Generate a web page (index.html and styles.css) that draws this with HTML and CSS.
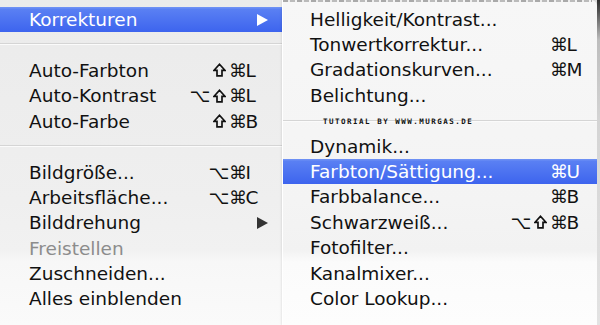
FILE: index.html
```html
<!DOCTYPE html>
<html lang="de">
<head>
<meta charset="utf-8">
<title>Korrekturen</title>
<link rel="stylesheet" href="styles.css">
</head>
<body>
<div class="screen">
  <div class="menu main">
    <div class="item hl"><span class="label">Korrekturen</span><span class="arrow"></span></div>
    <div class="sep"></div>
    <div class="item"><span class="label">Auto-Farbton</span><span class="keys"><span class="mod"><svg class="shift" viewBox="0 0 13 14" aria-label="⇧"><path d="M6.5 1.3 L11.9 7.3 H9 V12.9 H4 V7.3 H1.1 Z"/></svg></span><span class="mod">⌘</span><span class="key">L</span></span></div>
    <div class="item"><span class="label">Auto-Kontrast</span><span class="keys"><span class="mod">⌥</span><span class="mod"><svg class="shift" viewBox="0 0 13 14" aria-label="⇧"><path d="M6.5 1.3 L11.9 7.3 H9 V12.9 H4 V7.3 H1.1 Z"/></svg></span><span class="mod">⌘</span><span class="key">L</span></span></div>
    <div class="item"><span class="label">Auto-Farbe</span><span class="keys"><span class="mod"><svg class="shift" viewBox="0 0 13 14" aria-label="⇧"><path d="M6.5 1.3 L11.9 7.3 H9 V12.9 H4 V7.3 H1.1 Z"/></svg></span><span class="mod">⌘</span><span class="key">B</span></span></div>
    <div class="sep"></div>
    <div class="item"><span class="label">Bildgröße...</span><span class="keys"><span class="mod">⌥</span><span class="mod">⌘</span><span class="key">I</span></span></div>
    <div class="item"><span class="label">Arbeitsfläche...</span><span class="keys"><span class="mod">⌥</span><span class="mod">⌘</span><span class="key">C</span></span></div>
    <div class="item"><span class="label">Bilddrehung</span><span class="arrow"></span></div>
    <div class="item disabled"><span class="label">Freistellen</span></div>
    <div class="item"><span class="label">Zuschneiden...</span></div>
    <div class="item"><span class="label">Alles einblenden</span></div>
  </div>
  <div class="menu sub">
    <div class="rim"></div>
    <div class="item"><span class="label">Helligkeit/Kontrast...</span></div>
    <div class="item"><span class="label">Tonwertkorrektur...</span><span class="keys"><span class="mod">⌘</span><span class="key">L</span></span></div>
    <div class="item"><span class="label">Gradationskurven...</span><span class="keys"><span class="mod">⌘</span><span class="key">M</span></span></div>
    <div class="item"><span class="label">Belichtung...</span></div>
    <div class="sep"><span class="watermark">TUTORIAL BY WWW.MURGAS.DE</span></div>
    <div class="item"><span class="label">Dynamik...</span></div>
    <div class="item hl"><span class="label">Farbton/Sättigung...</span><span class="keys"><span class="mod">⌘</span><span class="key">U</span></span></div>
    <div class="item"><span class="label">Farbbalance...</span><span class="keys"><span class="mod">⌘</span><span class="key">B</span></span></div>
    <div class="item"><span class="label">Schwarzweiß...</span><span class="keys"><span class="mod">⌥</span><span class="mod"><svg class="shift" viewBox="0 0 13 14" aria-label="⇧"><path d="M6.5 1.3 L11.9 7.3 H9 V12.9 H4 V7.3 H1.1 Z"/></svg></span><span class="mod">⌘</span><span class="key">B</span></span></div>
    <div class="item"><span class="label">Fotofilter...</span></div>
    <div class="item"><span class="label">Kanalmixer...</span></div>
    <div class="item"><span class="label">Color Lookup...</span></div>
  </div>
  <div class="edge"></div>
</div>
</body>
</html>
```

FILE: styles.css
```css
html, body {
  margin: 0;
  padding: 0;
}
body {
  width: 600px;
  height: 325px;
  overflow: hidden;
  background: #dcdcdc;
  font-family: "DejaVu Sans", "Noto Sans", sans-serif;
  font-size: 18.5px;
  color: #111;
}
.screen {
  display: flex;
  height: 325px;
}
.menu {
  display: flex;
  flex-direction: column;
  box-sizing: border-box;
}
.main {
  width: 283px;
  padding-top: 7px;
  background: linear-gradient(#ebebeb 0, #efefef 200px, #f1f1f1 250px, #f7f7f7 262px, #fafafa 325px);
  box-shadow: inset -1px 0 0 #cfcfcf;
}
.sub {
  position: relative;
  width: 314px;
  background: linear-gradient(#f7f7f7 0, #f4f4f4 200px, #f2f2f2 250px, #fbfbfb 262px, #fdfdfd 325px);
  border-top-right-radius: 6px;
  box-shadow: -1px 0 0 #ffffff, -2px 0 2px rgba(0,0,0,0.08);
}
.rim {
  height: 2px;
  margin-bottom: 4.5px;
  margin-right: 5px;
  background: repeating-linear-gradient(90deg, #6a6a6a 0 5px, #e6e6e6 5px 7px, #8a8a8a 7px 12px, #f0f0f0 12px 14px);
  opacity: 0.55;
}
.edge {
  flex: 1;
  background: linear-gradient(#2e2e2e 0, #555 12px, #bdbdbd 40px, #d4d4d4 120px, #e3e3e3 325px);
}
.item {
  display: flex;
  align-items: center;
  height: 25.4px;
  flex: none;
  padding-left: 29px;
  padding-right: 15px;
  white-space: nowrap;
}
.sub .item {
  padding-left: 27px;
}
.item.hl {
  color: #fff;
  background: linear-gradient(#6d90f4 0, #6d90f4 1px, #5a80f3 2px, #3d64ee 100%);
}
.item.disabled {
  color: #8c8c8c;
}
.label {
  flex: 1;
}
.keys {
  display: flex;
  align-items: center;
}
.mod {
  width: 19px;
  display: flex;
  justify-content: center;
  font-size: 18px;
}
.shift {
  display: block;
  width: 13px;
  height: 14px;
  fill: none;
  stroke: currentColor;
  stroke-width: 1.7;
  stroke-linejoin: miter;
}
.key {
  margin-left: -2px;
  width: 22.5px;
}
.sub .key {
  width: 15.5px;
}
.arrow {
  width: 0;
  height: 0;
  border-left: 11px solid #333;
  border-top: 6.5px solid transparent;
  border-bottom: 6.5px solid transparent;
}
.hl .arrow {
  border-left-color: #fff;
}
.sep {
  position: relative;
  height: 25.4px;
  flex: none;
  display: flex;
  align-items: center;
}
.sep::before {
  content: "";
  display: block;
  width: 100%;
  height: 1px;
  background: #d5d5d5;
  box-shadow: 0 1px 0 #fbfbfb;
}
.main .sep::before {
  margin-top: -3px;
}
.watermark {
  position: absolute;
  left: 40px;
  top: 9px;
  font-family: "DejaVu Sans Mono", monospace;
  font-size: 7.5px;
  font-weight: bold;
  letter-spacing: 1.5px;
  color: #111;
}
```
